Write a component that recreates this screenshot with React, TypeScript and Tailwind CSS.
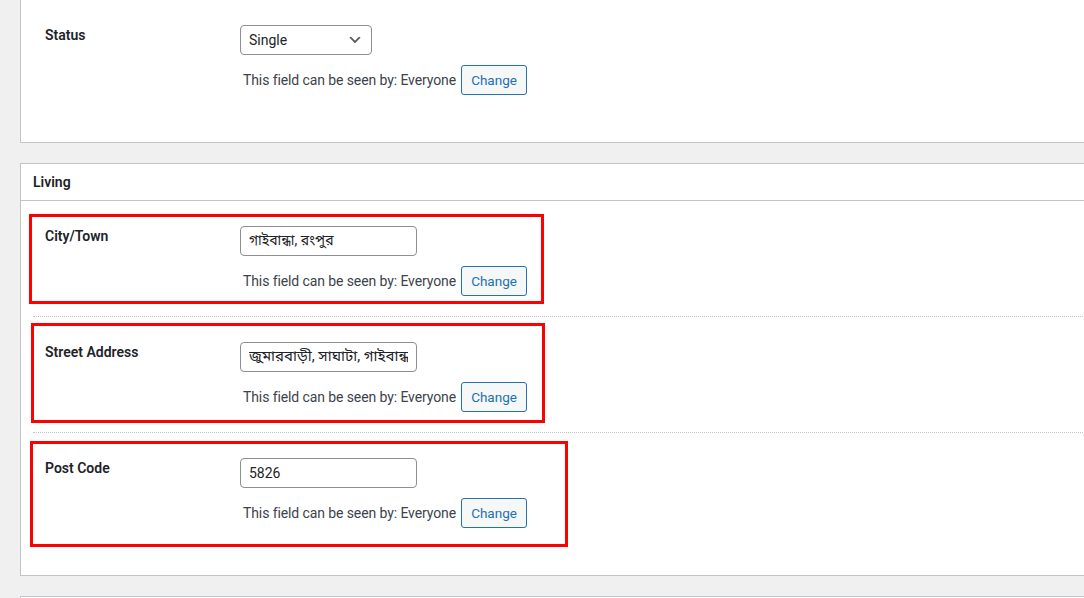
import React from "react";

function Visibility() {
  return (
    <div className="mt-[10px] flex items-center pl-[3px]">
      <span className="text-[14px] leading-[20px] tracking-[-0.1px] text-[#3c434a]">This field can be seen by: Everyone</span>
      <button className="ml-[5px] h-[30px] w-[66px] rounded-[3px] border border-[#2271b1] bg-[#f6f7f7] text-[13.5px] text-[#2271b1]">
        Change
      </button>
    </div>
  );
}

function Row({
  label,
  children,
  last,
  box,
}: {
  label: string;
  children: React.ReactNode;
  last?: boolean;
  box?: string;
}) {
  return (
    <div
      className={
        "relative mx-[12px] flex px-[12px] pb-[20px] pt-[25px] " +
        (last ? "" : "border-b border-dotted border-[#c3c4c7]")
      }
    >
      <div className="w-[195px] shrink-0 text-[14px] font-semibold leading-[21px] text-[#1d2327]">{label}</div>
      <div className="flex flex-col">
        {children}
        <Visibility />
      </div>
      {box && <div className={"pointer-events-none absolute border-[3px] border-[#ff0000] " + box} />}
    </div>
  );
}

function TextInput({ value, cls }: { value: string; cls?: string }) {
  return (
    <input
      readOnly
      value={value}
      className={
        "h-[30px] w-[177px] rounded-[4px] border border-[#8c8f94] bg-white px-[8px] text-[#1d2327] outline-none " +
        (cls || "text-[14px]")
      }
    />
  );
}

export default function App() {
  return (
    <div className="h-[598px] w-[1084px] overflow-hidden bg-[#f0f0f1] pl-[20px] font-['Segoe_UI','Roboto','Noto_Sans','Noto_Sans_Bengali',sans-serif]">
      {/* Top panel */}
      <div className="w-[1100px] border border-t-0 border-[#c3c4c7] bg-white pb-[27px]">
        <Row label="Status" last>
          <div className="relative flex h-[30px] w-[132px] items-center rounded-[4px] border border-[#8c8f94] bg-white pl-[8px] text-[14px] text-[#1d2327]">
            Single
            <svg className="absolute right-[8px] top-[6px]" width="16" height="16" viewBox="0 0 20 20">
              <path d="M5 6l5 5 5-5 2 1-7 7-7-7 2-1z" fill="#50575e" />
            </svg>
          </div>
        </Row>
      </div>

      {/* Living panel */}
      <div className="mt-[20px] w-[1100px] border border-[#c3c4c7] bg-white pb-[27px]">
        <div className="flex h-[37px] items-center border-b border-[#c3c4c7] px-[12px] text-[14px] font-semibold text-[#1d2327]">
          Living
        </div>
        <Row label="City/Town" box="left-[-4px] top-[13px] h-[90px] w-[515px]">
          <TextInput value="গাইবান্ধা, রংপুর" />
        </Row>
        <Row label="Street Address" box="left-[-2px] top-[6px] h-[100px] w-[514px]">
          <TextInput value="জুমারবাড়ী, সাঘাটা, গাইবান্ধা" cls="text-[15px]" />
        </Row>
        <Row label="Post Code" last box="left-[-3px] top-[8px] h-[106px] w-[538px]">
          <TextInput value="5826" />
        </Row>
      </div>

      {/* Next panel */}
      <div className="mt-[20px] h-[40px] w-[1100px] border border-[#c3c4c7] bg-white" />
    </div>
  );
}
